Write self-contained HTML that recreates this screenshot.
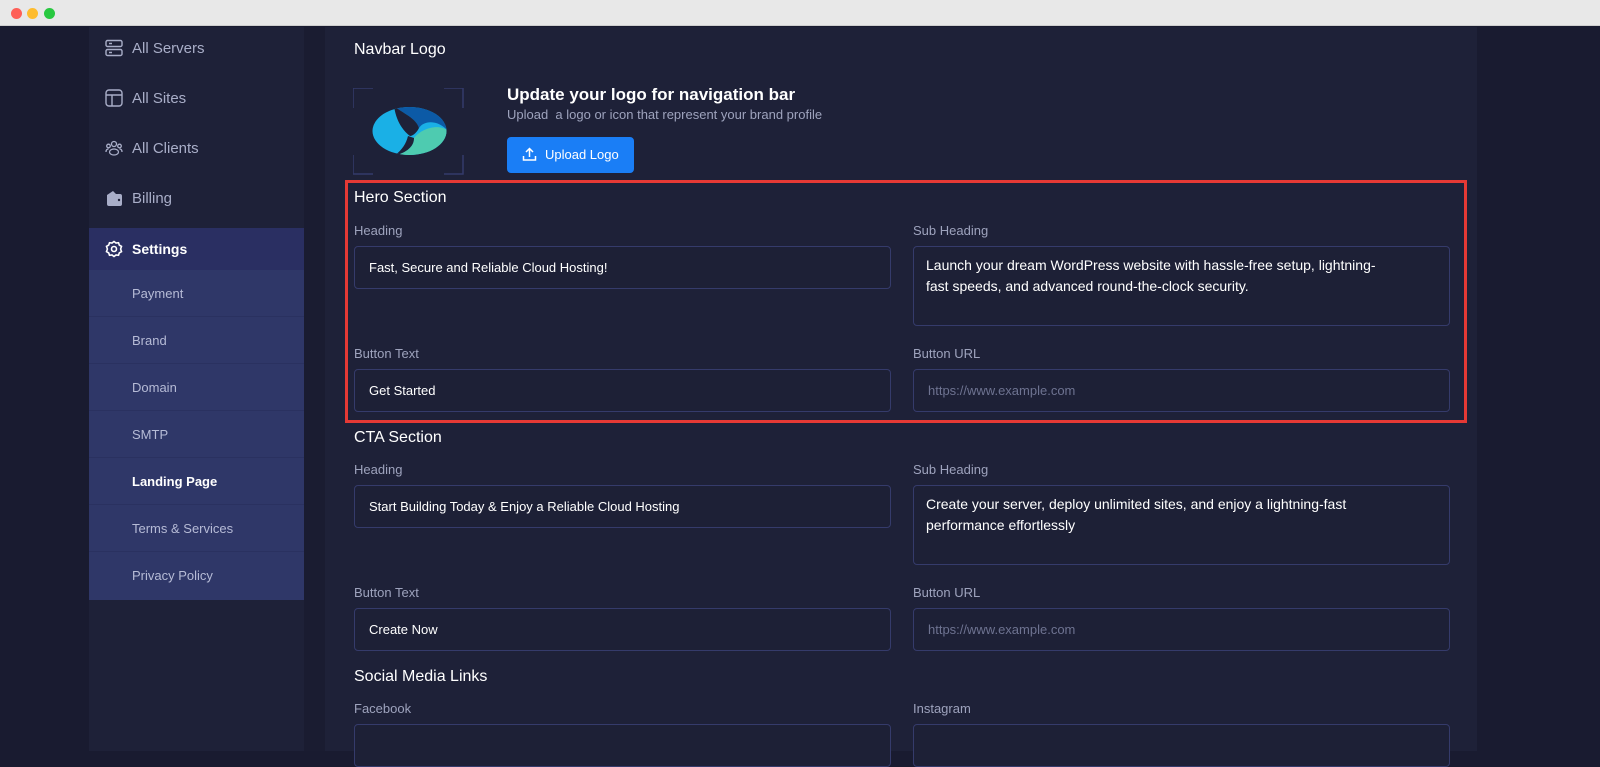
<!DOCTYPE html>
<html><head><style>
*{box-sizing:border-box;margin:0;padding:0}
body{width:1600px;height:751px;overflow:hidden;background:#191b30;font-family:"Liberation Sans",sans-serif;position:relative}
.tb{position:absolute;left:0;top:0;width:1600px;height:26px;background:#e8e8e8;border-bottom:1px solid #cfcfcf}
.dot{position:absolute;top:8px;width:11px;height:11px;border-radius:50%}
.side{position:absolute;left:89px;top:27px;width:215px;height:724px;background:#1e2138}
.gap{position:absolute;left:304px;top:27px;width:21px;height:724px;background:#1a1c31}
.main{position:absolute;left:325px;top:27px;width:1152px;height:724px;background:#1e2138}
.right{position:absolute;left:1477px;top:27px;width:123px;height:724px;background:#191b30}
.nav{position:absolute;left:0;width:215px;height:42px;color:#a9aec8;font-size:15px;display:flex;align-items:center;padding-left:16px}
.nav svg{margin-right:9px}
.sub{position:absolute;left:0;top:243px;width:215px;height:330px;background:#2f3768}
.si{height:47px;border-bottom:1px solid #2a3160;color:#b6bbd6;font-size:13px;padding-left:43px;line-height:47px}
.t{position:absolute;color:#fff}
.lbl{position:absolute;color:#9ea3bd;font-size:13px}
.in{position:absolute;height:43px;border:1px solid #353b6b;border-radius:4px;background:#1d2036;color:#fff;font-size:13px;padding-left:14px;line-height:41px}
.ta{position:absolute;height:80px;border:1px solid #353b6b;border-radius:4px;background:#1d2036;color:#fff;font-size:14px;padding:8px 60px 8px 12px;line-height:21px}
.ph{color:#6e7391}
.h{font-size:16px;color:#fff;position:absolute}
</style></head><body>
<div class="tb"><div class="dot" style="left:11px;background:#fe5f57"></div><div class="dot" style="left:27px;background:#febc2e"></div><div class="dot" style="left:44px;background:#28c840"></div></div>
<div class="side">
 <div class="nav" style="top:0"><svg width="18" height="18" viewBox="0 0 18 18" fill="none" stroke="#a9aec8" stroke-width="1.4"><rect x="1" y="1.5" width="16" height="6" rx="1.5"/><rect x="1" y="10.5" width="16" height="6" rx="1.5"/><path d="M4 4.5h3M4 13.5h3"/></svg>All Servers</div>
 <div class="nav" style="top:50px"><svg width="18" height="18" viewBox="0 0 18 18" fill="none" stroke="#a9aec8" stroke-width="1.4"><rect x="1" y="1" width="16" height="16" rx="3"/><path d="M1 6h16M7 6v11"/></svg>All Sites</div>
 <div class="nav" style="top:100px"><svg width="18" height="18" viewBox="0 0 18 18" fill="none" stroke="#a9aec8" stroke-width="1.3"><circle cx="9" cy="5" r="2.5"/><circle cx="3.5" cy="7" r="1.8"/><circle cx="14.5" cy="7" r="1.8"/><ellipse cx="9" cy="13" rx="4.5" ry="3"/><path d="M1 13c0-2 1-3 2.5-3M17 13c0-2-1-3-2.5-3"/></svg>All Clients</div>
 <div class="nav" style="top:150px"><svg width="18" height="18" viewBox="0 0 18 18"><path d="M2 6l6-4 3 3h4a2 2 0 0 1 2 2v8a2 2 0 0 1-2 2H4a2 2 0 0 1-2-2z" fill="#a9aec8"/><circle cx="14" cy="11" r="1.2" fill="#1e2138"/></svg>Billing</div>
 <div class="nav" style="top:201px;background:#2a2f62;color:#fff;font-weight:bold;font-size:14px"><svg width="18" height="18" viewBox="0 0 18 18" fill="none" stroke="#fff" stroke-width="1.6"><path d="M9 1.5l2 1.5 2.5-.3.8 2.4 2.2 1.3-.9 2.6.9 2.6-2.2 1.3-.8 2.4-2.5-.3-2 1.5-2-1.5-2.5.3-.8-2.4L1.5 11.6 2.4 9 1.5 6.4l2.2-1.3.8-2.4 2.5.3z"/><circle cx="9" cy="9" r="2.5"/></svg>Settings</div>
 <div class="sub">
  <div class="si">Payment</div><div class="si">Brand</div><div class="si">Domain</div><div class="si">SMTP</div>
  <div class="si" style="color:#fff;font-weight:bold">Landing Page</div><div class="si">Terms &amp; Services</div><div class="si" style="border:0">Privacy Policy</div>
 </div>
</div>
<div class="gap"></div>
<div class="main"></div>
<div class="right"></div>

<div class="h" style="left:354px;top:41px">Navbar Logo</div>
<svg style="position:absolute;left:353px;top:88px" width="111" height="87" viewBox="0 0 111 87" fill="none" stroke="#343a6a" stroke-width="1.5"><path d="M0 20V0h20M91 0h19v20M110 67v19H91M20 86H0V67"/></svg>
<svg style="position:absolute;left:372px;top:106px" width="75" height="50" viewBox="0 0 75 50">
<defs><clipPath id="c"><ellipse cx="37.5" cy="25" rx="37" ry="24"/></clipPath></defs>
<g clip-path="url(#c)">
<rect x="0" y="0" width="75" height="50" fill="#1ab0e6"/>
<path d="M22 0H75V24C66 14 52 14 47 22 44 12 32 8 22 0z" fill="#0c5aa6"/>
<path d="M75 24V50H22C36 46 42 40 42 32 50 22 66 18 75 24z" fill="#4ecbb0"/>
<path d="M22 0C32 8 44 12 47 22 44 28 40 30 38 30 30 24 24 14 22 0z" fill="#1e2138"/>
<path d="M42 32C42 40 36 46 22 50 30 44 34 38 36 30z" fill="#1e2138"/>
</g></svg>
<div class="t" style="left:507px;top:85px;font-size:17px;font-weight:bold">Update your logo for navigation bar</div>
<div class="t" style="left:507px;top:107px;font-size:13px;color:#9ea3bd">Upload&nbsp; a logo or icon that represent your brand profile</div>
<div style="position:absolute;left:507px;top:137px;width:127px;height:36px;background:#1a7ef6;border-radius:4px;color:#fff;font-size:13px;line-height:36px;padding-left:38px">Upload Logo</div>
<svg style="position:absolute;left:522px;top:147px" width="15" height="15" viewBox="0 0 15 15" fill="none" stroke="#fff" stroke-width="1.5"><path d="M7.5 10V1.5M4 5l3.5-3.5L11 5M1.5 9v4h12V9"/></svg>

<div style="position:absolute;left:345px;top:180px;width:1122px;height:243px;border:3px solid #e53935"></div>
<div class="h" style="left:354px;top:189px">Hero Section</div>
<div class="lbl" style="left:354px;top:223px">Heading</div>
<div class="lbl" style="left:913px;top:223px">Sub Heading</div>
<div class="in" style="left:354px;top:246px;width:537px">Fast, Secure and Reliable Cloud Hosting!</div>
<div class="ta" style="left:913px;top:246px;width:537px">Launch your dream WordPress website with hassle-free setup, lightning-fast speeds, and advanced round-the-clock security.</div>
<div class="lbl" style="left:354px;top:346px">Button Text</div>
<div class="lbl" style="left:913px;top:346px">Button URL</div>
<div class="in" style="left:354px;top:369px;width:537px">Get Started</div>
<div class="in ph" style="left:913px;top:369px;width:537px">https://www.example.com</div>

<div class="h" style="left:354px;top:429px">CTA Section</div>
<div class="lbl" style="left:354px;top:462px">Heading</div>
<div class="lbl" style="left:913px;top:462px">Sub Heading</div>
<div class="in" style="left:354px;top:485px;width:537px">Start Building Today &amp; Enjoy a Reliable Cloud Hosting</div>
<div class="ta" style="left:913px;top:485px;width:537px">Create your server, deploy unlimited sites, and enjoy a lightning-fast performance effortlessly</div>
<div class="lbl" style="left:354px;top:585px">Button Text</div>
<div class="lbl" style="left:913px;top:585px">Button URL</div>
<div class="in" style="left:354px;top:608px;width:537px">Create Now</div>
<div class="in ph" style="left:913px;top:608px;width:537px">https://www.example.com</div>

<div class="h" style="left:354px;top:668px">Social Media Links</div>
<div class="lbl" style="left:354px;top:701px">Facebook</div>
<div class="lbl" style="left:913px;top:701px">Instagram</div>
<div class="in" style="left:354px;top:724px;width:537px"></div>
<div class="in" style="left:913px;top:724px;width:537px"></div>
</body></html>
